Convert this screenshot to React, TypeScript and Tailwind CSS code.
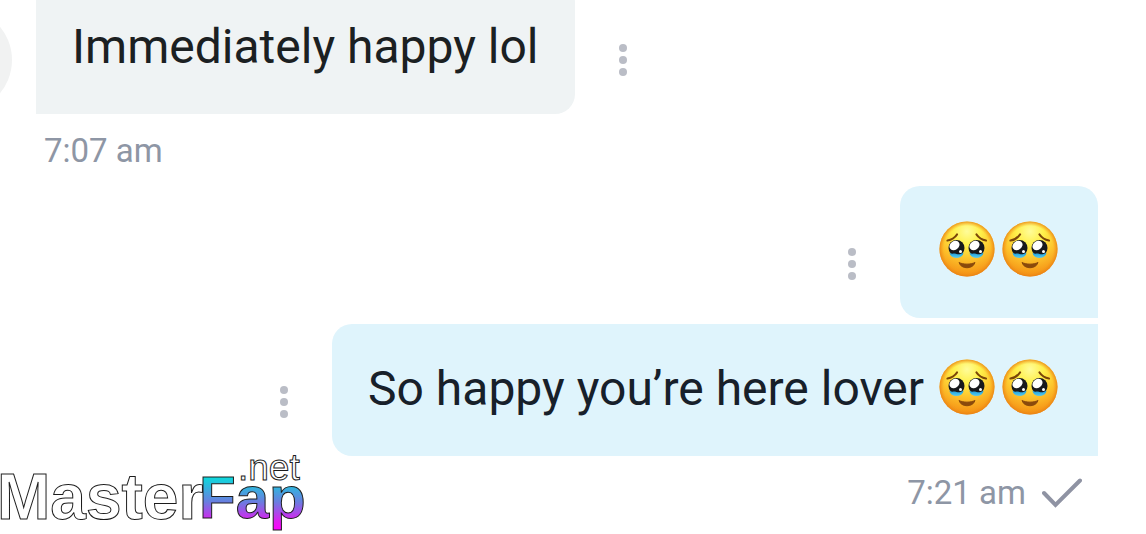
import type { ReactNode } from 'react';

const HoldingBackTears = () => (
  <svg
    role="img"
    aria-label="face holding back tears"
    viewBox="0 0 56 56"
    className="size-14 shrink-0"
  >
    <defs>
      <radialGradient id="face" cx="0.5" cy="0.18" r="0.82">
        <stop offset="0" stopColor="#fffc9a" />
        <stop offset="0.3" stopColor="#fff04a" />
        <stop offset="0.6" stopColor="#fdc52d" />
        <stop offset="1" stopColor="#f48c12" />
      </radialGradient>
      <radialGradient id="rim" cx="0.5" cy="0.5" r="0.5">
        <stop offset="0.84" stopColor="#f39a1c" stopOpacity="0" />
        <stop offset="1" stopColor="#e87f13" stopOpacity="0.8" />
      </radialGradient>
      <linearGradient id="tear" x1="0" y1="0" x2="0" y2="1">
        <stop offset="0" stopColor="#2390c4" />
        <stop offset="0.5" stopColor="#35b5ea" />
        <stop offset="1" stopColor="#6cc8d8" />
      </linearGradient>
    </defs>
    <circle cx="28" cy="28" r="27.5" fill="url(#face)" />
    <circle cx="28" cy="28" r="27.5" fill="url(#rim)" />
    <g fill="none" stroke="#7b4608" strokeWidth="2.2" strokeLinecap="round">
      <path d="M8.500 19.500c4-.6 7.500-3 9.500-6" />
      <path d="M47 19.500c-4-.6-7.500-3-9.500-6" />
    </g>
    <circle cx="17.5" cy="27" r="8" fill="#17191d" />
    <circle cx="37.5" cy="27" r="8" fill="#17191d" />
    <path d="M10.500 31.500c2 2 4 .5 7 1.500s5-.5 7-1.500c-.5 4-3.500 5.500-7 5.500s-6.500-1.500-7-5.500z" fill="url(#tear)" />
    <path d="M30.500 31.500c2 2 4 .5 7 1.500s5-.5 7-1.500c-.5 4-3.500 5.500-7 5.500s-6.500-1.500-7-5.500z" fill="url(#tear)" />
    <g fill="#fff">
      <ellipse cx="15.500" cy="24.500" rx="5.400" ry="4.300" transform="rotate(-35 15.500 24.500)" />
      <ellipse cx="35.500" cy="24.500" rx="5.400" ry="4.300" transform="rotate(-35 35.500 24.500)" />
      <circle cx="21.500" cy="30.500" r="1.500" />
      <circle cx="41.500" cy="30.500" r="1.500" />
    </g>
    <path
      d="M20 41.500c4.500 2.200 11.500 2.200 16 0-2 7-14 7-16 0z"
      fill="#8a4a0c"
      stroke="#8a4a0c"
      strokeWidth="1"
      strokeLinejoin="round"
    />
  </svg>
);

const Emojis = () => (
  <span className="inline-flex h-15 items-center gap-[7px] pr-1 pb-1 pl-[3px] align-top">
    <HoldingBackTears />
    <HoldingBackTears />
  </span>
);

const MenuButton = () => (
  <button
    type="button"
    aria-label="Message options"
    className="flex w-24 shrink-0 flex-col items-center gap-1 self-center pt-6"
  >
    <span className="size-2 rounded-full bg-[#babdc6]" />
    <span className="size-2 rounded-full bg-[#babdc6]" />
    <span className="size-2 rounded-full bg-[#babdc6]" />
  </button>
);

const Received = ({ children }: { children: ReactNode }) => (
  <div className="flex">
    <p className="rounded-[20px] rounded-bl-none bg-[#eff3f4] px-9 pt-[35px] pb-[37px] text-[48px] leading-[60px] text-[#1b2022]">
      {children}
    </p>
    <MenuButton />
  </div>
);

const Sent = ({ children, last }: { children: ReactNode; last?: boolean }) => (
  <div className="flex justify-end">
    <MenuButton />
    <p
      className={`bg-[#dff4fc] px-9 pt-[35px] pb-[37px] text-[48px] leading-[60px] text-[#17202a] ${
        last ? 'rounded-l-[20px]' : 'rounded-[20px] rounded-br-none'
      }`}
    >
      {children}
    </p>
  </div>
);

const Watermark = () => (
  <svg
    viewBox="0 0 304 84"
    className="absolute bottom-0 left-0 h-[84px] w-[304px] overflow-visible font-['Liberation_Sans',Arial,sans-serif]"
  >
    <defs>
      <linearGradient id="fap" gradientUnits="userSpaceOnUse" x1="0" y1="24" x2="0" y2="80">
        <stop offset="0" stopColor="#00e6dc" />
        <stop offset="0.5" stopColor="#6a7de0" />
        <stop offset="0.85" stopColor="#e01cf0" />
        <stop offset="1" stopColor="#ff00ff" />
      </linearGradient>
    </defs>
    <g stroke="#1c1c1c" strokeWidth="1" fontWeight="700">
      <text x="-3" y="69" fontSize="64" fill="#fff">
        Master
      </text>
      <text x="199" y="68" fontSize="60" fill="url(#fap)">
        Fap
      </text>
      <text x="238" y="30" fontSize="37" fontWeight="400" fill="#fff">
        .net
      </text>
    </g>
  </svg>
);

export default function App() {
  return (
    <main className="relative min-h-screen overflow-hidden bg-white pr-12 font-[Roboto,sans-serif]">
      <div className="-mt-[18px] flex gap-6">
        <div className="-ml-[92px] mt-[26px] size-[104px] shrink-0 rounded-full bg-[#f1f2f2]" />
        <Received>Immediately happy lol</Received>
      </div>
      <div className="flex h-18 items-center pt-0.5 pl-11 text-[33px] leading-10 text-[#8e96a5]">
        <time>7:07 am</time>
      </div>

      <div className="flex flex-col gap-1.5">
        <Sent>
          <Emojis />
        </Sent>
        <Sent last>
          So happy you’re here lover <Emojis />
        </Sent>
      </div>
      <div className="flex h-18 items-center justify-end gap-4 pt-0.5 pr-4 text-[33px] leading-10 text-[#8e96a5]">
        <time>7:21 am</time>
        <svg aria-label="Sent" role="img" viewBox="0 0 40 30" className="h-[30px] w-10">
          <path
            d="M2 15l11.500 12L38 2.500"
            fill="none"
            stroke="#8f93a3"
            strokeWidth="4"
            strokeLinecap="round"
          />
        </svg>
      </div>

      <Watermark />
    </main>
  );
}
